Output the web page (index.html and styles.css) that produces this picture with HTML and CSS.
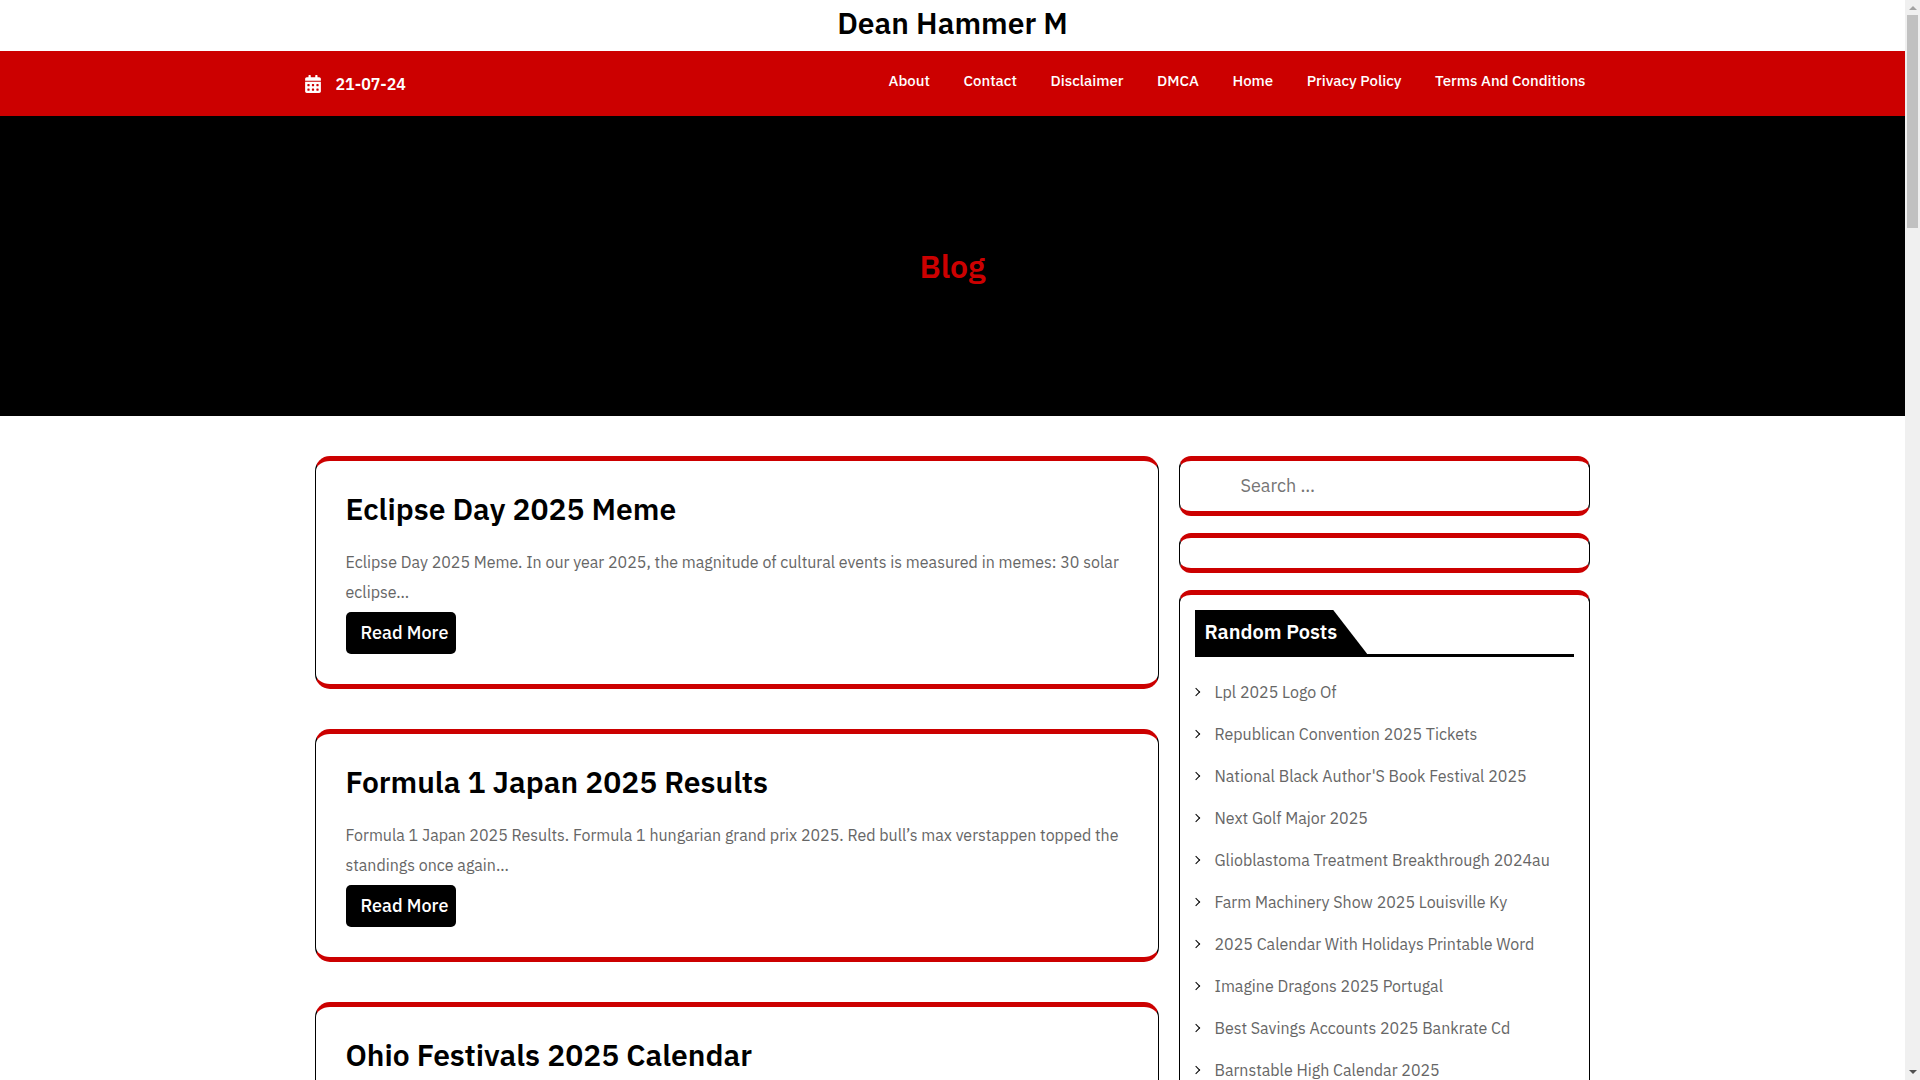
FILE: index.html
```html
<!DOCTYPE html>
<html lang="en">
<head>
    <meta charset="UTF-8">
    <meta name="viewport" content="width=device-width, initial-scale=1.0">
    <title>Dean Hammer M</title>
    <link rel="stylesheet" href="styles.css">
</head>
<body>
    <div class="page">
        <header>
            <h1 class="site-title"><a href="#">Dean Hammer M</a></h1>
            <div class="topbar">
                <div class="container topbar-inner">
                    <div class="date">
                        <svg class="date-icon" viewBox="0 0 448 512" aria-hidden="true"><path fill="currentColor" fill-rule="evenodd" d="M0 464c0 26.500 21.500 48 48 48h352c26.500 0 48-21.500 48-48V192H0zM76 256h40q12 0 12 12v40q0 12-12 12H76q-12 0-12-12v-40q0-12 12-12zm128 0h40q12 0 12 12v40q0 12-12 12h-40q-12 0-12-12v-40q0-12 12-12zm128 0h40q12 0 12 12v40q0 12-12 12h-40q-12 0-12-12v-40q0-12 12-12zM76 384h40q12 0 12 12v40q0 12-12 12H76q-12 0-12-12v-40q0-12 12-12zm128 0h40q12 0 12 12v40q0 12-12 12h-40q-12 0-12-12v-40q0-12 12-12zm128 0h40q12 0 12 12v40q0 12-12 12h-40q-12 0-12-12v-40q0-12 12-12zM400 64h-48V16c0-8.800-7.200-16-16-16h-32c-8.800 0-16 7.200-16 16v48H160V16c0-8.800-7.200-16-16-16h-32c-8.800 0-16 7.200-16 16v48H48C21.500 64 0 85.500 0 112v48h448v-48c0-26.500-21.500-48-48-48z"/></svg>
                        <span>21-07-24</span>
                    </div>
                    <nav class="menu">
                        <a href="#">About</a>
                        <a href="#">Contact</a>
                        <a href="#">Disclaimer</a>
                        <a href="#">DMCA</a>
                        <a href="#">Home</a>
                        <a href="#">Privacy Policy</a>
                        <a href="#">Terms And Conditions</a>
                    </nav>
                </div>
            </div>
        </header>

        <div class="banner">
            <h2>Blog</h2>
        </div>

        <div class="container content">
            <main class="posts">
                <article class="post">
                    <h2><a href="#">Eclipse Day 2025 Meme</a></h2>
                    <p>Eclipse Day 2025 Meme. In our year 2025, the magnitude of cultural events is measured in memes: 30 solar eclipse…</p>
                    <a class="read-more" href="#">Read More</a>
                </article>
                <article class="post">
                    <h2><a href="#">Formula 1 Japan 2025 Results</a></h2>
                    <p>Formula 1 Japan 2025 Results. Formula 1 hungarian grand prix 2025. Red bull’s max verstappen topped the standings once again…</p>
                    <a class="read-more" href="#">Read More</a>
                </article>
                <article class="post">
                    <h2><a href="#">Ohio Festivals 2025 Calendar</a></h2>
                </article>
            </main>

            <aside class="sidebar">
                <form class="widget search">
                    <input type="search" placeholder="Search …" aria-label="Search">
                </form>
                <div class="widget"></div>
                <section class="widget">
                    <h3 class="widget-title"><span>Random Posts</span></h3>
                    <ul class="links">
                        <li><a href="#">Lpl 2025 Logo Of</a></li>
                        <li><a href="#">Republican Convention 2025 Tickets</a></li>
                        <li><a href="#">National Black Author'S Book Festival 2025</a></li>
                        <li><a href="#">Next Golf Major 2025</a></li>
                        <li><a href="#">Glioblastoma Treatment Breakthrough 2024au</a></li>
                        <li><a href="#">Farm Machinery Show 2025 Louisville Ky</a></li>
                        <li><a href="#">2025 Calendar With Holidays Printable Word</a></li>
                        <li><a href="#">Imagine Dragons 2025 Portugal</a></li>
                        <li><a href="#">Best Savings Accounts 2025 Bankrate Cd</a></li>
                        <li><a href="#">Barnstable High Calendar 2025</a></li>
                    </ul>
                </section>
            </aside>
        </div>
    </div>

    <div class="scrollbar" aria-hidden="true">
        <span class="arrow up"></span>
        <span class="thumb"></span>
        <span class="arrow down"></span>
    </div>
</body>
</html>
```
FILE: styles.css
```css
* { box-sizing: border-box; }
body { display: flex; height: 100vh; margin: 0; overflow: hidden; background: #fff; color: #000; font-family: "IBM Plex Sans", Roboto, "Liberation Sans", sans-serif; font-size: 16px; }
h1, h2, h3, p, ul { margin: 0; padding: 0; font-weight: 600; }
a { color: inherit; text-decoration: none; }

.page { flex: 1; min-width: 0; overflow: hidden; }
.container { max-width: 1296px; margin: 0 auto; }

/* header */
.site-title { padding-bottom: 5px; font-size: 30px; line-height: 46px; text-align: center; }
.topbar { background: #c00; color: #fff; }
.topbar-inner { display: flex; justify-content: space-between; align-items: flex-start; height: 65px; padding-right: 15px; }
.date { display: flex; align-items: center; gap: 15px; padding-top: 18px; font-size: 16px; font-weight: 600; line-height: 30px; }
.date-icon { width: 16px; height: 18px; }
.menu { padding-top: 15px; font-size: 15px; font-weight: 500; line-height: 30px; }
.menu a { margin-left: 30px; }

.banner { display: flex; align-items: center; justify-content: center; height: 300px; background: #000; color: #c00; }
.banner h2 { font-size: 32px; line-height: 36px; }

/* posts */
.content { display: flex; padding-top: 40px; }
.posts { width: 66.6667%; padding: 0 10px; }
.post { margin-bottom: 40px; padding: 30px; border: 1px solid #000; border-width: 5px 1px; border-color: #c00 #000; border-radius: 15px; }
.post h2 { margin-bottom: 20px; font-size: 30px; line-height: 36px; }
.post p { margin-bottom: 5px; color: #666; font-weight: 400; line-height: 30px; }
.read-more { display: block; width: fit-content; padding: 6px 8px 6px 15px; border-radius: 5px; background: #000; color: #fff; font-size: 18px; font-weight: 500; line-height: 30px; }

/* sidebar */
.sidebar { width: 33.3333%; padding: 0 10px; }
.widget { margin-bottom: 17px; padding: 15px; border: 1px solid #000; border-width: 5px 1px; border-color: #c00 #000; border-radius: 12px; }
.search { padding: 0 15px 2px; }
.search input { display: block; width: 100%; height: 48px; padding: 0 46px; border: 0; outline: 0; background: none; font: inherit; font-size: 18px; }
.search input::placeholder { color: #757575; }
.widget-title { border-bottom: 3px solid #000; font-size: 20px; line-height: 44px; }
.widget-title span { display: block; width: fit-content; padding: 0 30px 0 10px; background: #000; color: #fff; clip-path: polygon(0 0, calc(100% - 34px) 0, 100% 100%, 0 100%); }
.links { padding-top: 14px; list-style: none; color: #666; font-weight: 400; }
.links li { display: flex; align-items: center; line-height: 42px; }
.links li::before { content: ""; width: 5px; height: 5px; margin-right: 16px; margin-left: -2px; border: solid #000; border-width: 1px 1px 0 0; transform: rotate(45deg); }

/* scrollbar */
.scrollbar { display: flex; flex-direction: column; align-items: center; width: 15px; padding: 6px 0; background: #f0f0f0; }
.arrow { border: 4px solid transparent; }
.up { border-top: 0; border-bottom-color: #a3a3a3; }
.down { margin-top: auto; border-bottom: 0; border-top-color: #505050; }
.thumb { width: 11px; height: 213px; margin-top: 5px; background: #c1c1c1; }
```
